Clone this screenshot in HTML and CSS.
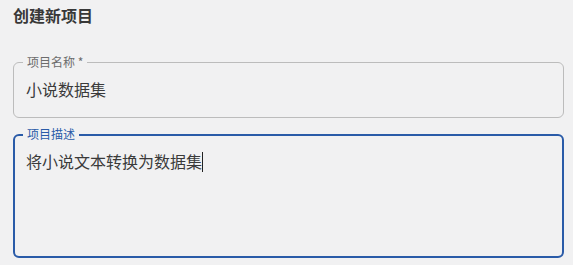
FILE: index.html
```html
<!DOCTYPE html>
<html lang="zh-CN">
<head>
<meta charset="utf-8">
<title>创建新项目</title>
<link rel="stylesheet" href="styles.css">
</head>
<body>
<div class="dialog">
  <h2 class="title">创建新项目</h2>
  <div class="field">
    <span class="label">项目名称 *</span>
    <div class="value">小说数据集</div>
  </div>
  <div class="field field-focus">
    <span class="label label-focus">项目描述</span>
    <div class="value">将小说文本转换为数据集<span class="caret"></span></div>
  </div>
</div>
</body>
</html>
```
FILE: styles.css
```css
html, body {
  margin: 0;
  padding: 0;
  background: #f1f1f2;
}
body {
  font-family: "Noto Sans CJK SC", "Noto Sans", sans-serif;
  color: #333;
}
.dialog {
  width: 573px;
  height: 265px;
  box-sizing: border-box;
  padding: 3px 9px 0 13px;
  display: flex;
  flex-direction: column;
}
.title {
  margin: 0;
  font-size: 16px;
  line-height: 24px;
  font-weight: 700;
  color: #383838;
}
.field {
  position: relative;
  margin-top: 35px;
  height: 56px;
  box-sizing: border-box;
  border: 1px solid #bcbcbc;
  border-radius: 6px;
  padding: 14px 12px 0 12px;
}
.field-focus {
  margin-top: 16px;
  height: 124px;
  border: 2px solid #2a5ba8;
  padding: 13px 11px 0 11px;
}
.label {
  position: absolute;
  left: 9px;
  top: -8px;
  padding: 0 4px;
  font-size: 12px;
  line-height: 14px;
  color: #6c6c6c;
  background: #f1f1f2;
}
.label-focus {
  left: 8px;
  top: -9px;
  color: #2a5ba8;
}
.value {
  font-size: 16px;
  line-height: 24px;
  color: #3a3a3a;
}
.caret {
  display: inline-block;
  width: 1px;
  height: 20px;
  background: #222;
  vertical-align: -4px;
}
```
